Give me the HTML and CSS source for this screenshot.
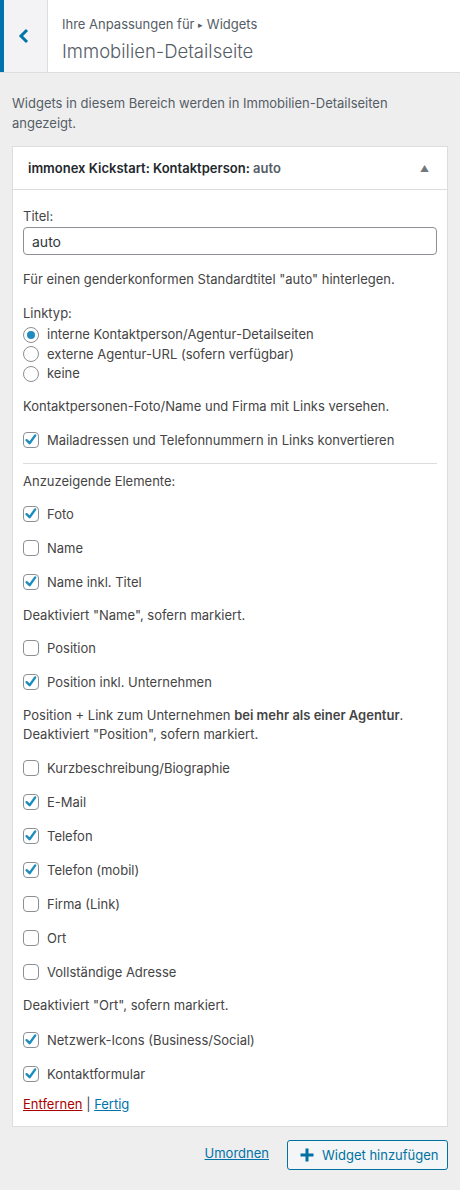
FILE: index.html
```html
<!DOCTYPE html>
<html lang="de">
<head>
<meta charset="utf-8">
<title>Immobilien-Detailseite</title>
<link rel="stylesheet" href="styles.css">
</head>
<body>
<header class="sec-head">
  <button class="back" type="button" aria-label="Zurück">
    <svg width="12" height="16" viewBox="0 0 12 16"><path d="M9 2 L3 8 L9 14" fill="none" stroke="#0073aa" stroke-width="3"/></svg>
  </button>
  <div class="sec-title">
    <div class="crumb">Ihre Anpassungen für <span class="tri">▸</span> Widgets</div>
    <h1>Immobilien-Detailseite</h1>
  </div>
</header>

<main class="panel">
  <p class="desc">Widgets in diesem Bereich werden in Immobilien-Detailseiten angezeigt.</p>

  <section class="widget">
    <div class="w-top">
      <h3>immonex Kickstart: Kontaktperson:<span class="in-title"> auto</span></h3>
      <span class="toggle">▲</span>
    </div>
    <div class="w-inside">
      <label class="lbl m-first">Titel:</label>
      <input class="txt" type="text" value="auto">
      <p class="t m-14">Für einen genderkonformen Standardtitel "auto" hinterlegen.</p>

      <p class="t m-14">Linktyp:</p>
      <div class="radios">
        <label class="rd"><span class="circle on"></span>interne Kontaktperson/Agentur-Detailseiten</label>
        <label class="rd"><span class="circle"></span>externe Agentur-URL (sofern verfügbar)</label>
        <label class="rd"><span class="circle"></span>keine</label>
      </div>
      <p class="t m-12">Kontaktpersonen-Foto/Name und Firma mit Links versehen.</p>
      <label class="cb m-14"><span class="box on"><svg viewBox="0 0 16 16"><path d="M3.6 8.2 L6.6 11.2 L12.2 3.4"/></svg></span>Mailadressen und Telefonnummern in Links konvertieren</label>

      <hr class="sep">

      <p class="t m-7">Anzuzeigende Elemente:</p>
      <label class="cb m-13"><span class="box on"><svg viewBox="0 0 16 16"><path d="M3.6 8.2 L6.6 11.2 L12.2 3.4"/></svg></span>Foto</label>
      <label class="cb m-14"><span class="box"></span>Name</label>
      <label class="cb m-14"><span class="box on"><svg viewBox="0 0 16 16"><path d="M3.6 8.2 L6.6 11.2 L12.2 3.4"/></svg></span>Name inkl. Titel</label>
      <p class="t m-13">Deaktiviert "Name", sofern markiert.</p>
      <label class="cb m-13"><span class="box"></span>Position</label>
      <label class="cb m-14"><span class="box on"><svg viewBox="0 0 16 16"><path d="M3.6 8.2 L6.6 11.2 L12.2 3.4"/></svg></span>Position inkl. Unternehmen</label>
      <p class="t two m-14">Position + Link zum Unternehmen <b>bei mehr als einer Agentur</b>.<br>Deaktiviert "Position", sofern markiert.</p>
      <label class="cb m-13"><span class="box"></span>Kurzbeschreibung/Biographie</label>
      <label class="cb m-14"><span class="box on"><svg viewBox="0 0 16 16"><path d="M3.6 8.2 L6.6 11.2 L12.2 3.4"/></svg></span>E-Mail</label>
      <label class="cb m-14"><span class="box on"><svg viewBox="0 0 16 16"><path d="M3.6 8.2 L6.6 11.2 L12.2 3.4"/></svg></span>Telefon</label>
      <label class="cb m-14"><span class="box on"><svg viewBox="0 0 16 16"><path d="M3.6 8.2 L6.6 11.2 L12.2 3.4"/></svg></span>Telefon (mobil)</label>
      <label class="cb m-14"><span class="box"></span>Firma (Link)</label>
      <label class="cb m-14"><span class="box"></span>Ort</label>
      <label class="cb m-14"><span class="box"></span>Vollständige Adresse</label>
      <p class="t m-13">Deaktiviert "Ort", sofern markiert.</p>
      <label class="cb m-15"><span class="box on"><svg viewBox="0 0 16 16"><path d="M3.6 8.2 L6.6 11.2 L12.2 3.4"/></svg></span>Netzwerk-Icons (Business/Social)</label>
      <label class="cb m-14"><span class="box on"><svg viewBox="0 0 16 16"><path d="M3.6 8.2 L6.6 11.2 L12.2 3.4"/></svg></span>Kontaktformular</label>
      <div class="actions m-10"><a class="del" href="#">Entfernen</a> | <a class="done" href="#">Fertig</a></div>
    </div>
  </section>

  <div class="footer">
    <a class="reorder" href="#">Umordnen</a>
    <button class="add" type="button">
      <svg width="14" height="14" viewBox="0 0 14 14"><path d="M7 0.5 V13.5 M0.5 7 H13.5" stroke="#0071a1" stroke-width="3"/></svg>
      <span>Widget hinzufügen</span>
    </button>
  </div>
</main>
</body>
</html>
```

FILE: styles.css
```css
* { box-sizing: border-box; }
html, body { margin: 0; padding: 0; }
body {
  background: #eeeeee;
  font-family: Inter, "Liberation Sans", Arial, sans-serif;
  font-size: 13px;
  color: #444;
  width: 460px;
  min-height: 1190px;
}

.sec-head {
  display: flex;
  height: 73px;
  background: #fff;
  border-bottom: 1px solid #dddddd;
}
.back {
  width: 48px;
  flex: none;
  background: #f3f3f5;
  border: 0;
  border-left: 4px solid #0073aa;
  border-right: 1px solid #dddddd;
  display: flex;
  align-items: center;
  justify-content: center;
  padding: 0 4px 0 0;
}
.sec-title {
  padding: 15px 0 0 14px;
}
.crumb {
  font-size: 13px;
  line-height: 18px;
  color: #555d66;
}
.tri { font-size: 9px; position: relative; top: -1px; }
.sec-title h1 {
  margin: 4px 0 0;
  font-size: 18.5px;
  line-height: 24px;
  font-weight: 300;
  color: #555d66;
}

.panel { padding: 0 12px; }
.desc {
  margin: 0;
  padding-top: 20px;
  line-height: 20px;
  color: #555d66;
}

.widget {
  margin-top: 13px;
  background: #fff;
  border: 1px solid #dddddd;
}
.w-top {
  height: 43px;
  border-bottom: 1px solid #dddddd;
  display: flex;
  align-items: center;
  justify-content: space-between;
  padding: 0 18px 0 15px;
}
.w-top h3 {
  margin: 0;
  font-size: 13px;
  font-weight: 600;
  color: #23282d;
}
.in-title { color: #555d66; font-weight: 600; }
.toggle { font-size: 9px; color: #72777c; }

.w-inside {
  padding: 0 10px 12px;
  display: flex;
  flex-direction: column;
}
.lbl, .t, .cb, .rd, .actions {
  display: block;
  margin: 0;
  line-height: 20px;
}
.m-first { margin-top: 16px; }
.m-7 { margin-top: 7px; }
.m-10 { margin-top: 10px; }
.m-12 { margin-top: 12px; }
.m-13 { margin-top: 13px; }
.m-14 { margin-top: 14px; }
.m-15 { margin-top: 15px; }
.t.two { line-height: 19.5px; }
.t b { font-weight: 600; }

.txt {
  margin-top: 1px;
  height: 28px;
  width: 100%;
  border: 1px solid #8c8f94;
  border-radius: 4px;
  padding: 0 8px;
  font-family: inherit;
  font-size: 14px;
  color: #32373c;
  background: #fff;
}

.radios { margin-top: 2px; }
.rd { line-height: 19.5px; display: flex; align-items: center; }
.circle {
  width: 16px; height: 16px;
  border: 1px solid #8c8f94;
  border-radius: 50%;
  margin-right: 8px;
  display: inline-flex;
  align-items: center;
  justify-content: center;
  background: #fff;
  flex: none;
}
.circle.on::after {
  content: "";
  width: 8px; height: 8px;
  border-radius: 50%;
  background: #1e8cbe;
}

.cb { display: flex; align-items: center; }
.box {
  width: 16px; height: 16px;
  border: 1px solid #8c8f94;
  border-radius: 4px;
  margin-right: 8px;
  background: #fff;
  flex: none;
  position: relative;
}
.box svg {
  position: absolute;
  left: -1px; top: -1px;
  width: 16px; height: 16px;
}
.box svg path {
  fill: none;
  stroke: #1e8cbe;
  stroke-width: 2.4;
  stroke-linecap: round;
  stroke-linejoin: round;
}

.sep {
  margin: 13px 0 0;
  border: 0;
  border-top: 1px solid #dddddd;
  height: 0;
}

.actions a { text-decoration: underline; }
.del { color: #a00; }
.done { color: #0073aa; }

.footer {
  margin-top: 13px;
  display: flex;
  justify-content: flex-end;
  align-items: center;
  gap: 18px;
}
.reorder {
  color: #0073aa;
  text-decoration: underline;
  font-size: 13px;
  margin-top: -3px;
}
.add {
  height: 30px;
  width: 161px;
  border: 1px solid #0071a1;
  border-radius: 3px;
  background: #f3f5f6;
  color: #0071a1;
  font-family: inherit;
  font-size: 13px;
  white-space: nowrap;
  display: flex;
  align-items: center;
  padding: 0 0 0 12px;
  gap: 8px;
}
```
